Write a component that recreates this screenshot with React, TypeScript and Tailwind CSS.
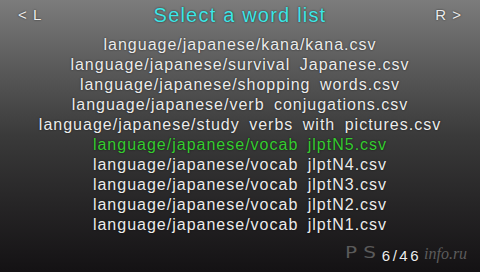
const files = [
  'language/japanese/kana/kana.csv',
  'language/japanese/survival Japanese.csv',
  'language/japanese/shopping words.csv',
  'language/japanese/verb conjugations.csv',
  'language/japanese/study verbs with pictures.csv',
  'language/japanese/vocab jlptN5.csv',
  'language/japanese/vocab jlptN4.csv',
  'language/japanese/vocab jlptN3.csv',
  'language/japanese/vocab jlptN2.csv',
  'language/japanese/vocab jlptN1.csv',
];

const selected = 5;

export default function App() {
  return (
    <div
      className="relative w-[480px] h-[272px] overflow-hidden bg-gradient-to-b from-[#7c7c7c] via-[#3a3a3a] to-[#141214] text-[#ececec] [text-shadow:0_0_2px_rgba(0,0,0,0.7)]"
      style={{ fontFamily: '"Liberation Sans", Arial, sans-serif' }}
    >
      <div className="flex items-center justify-between h-[30px] px-[18px]">
        <span className="text-[15px] tracking-[1px] w-[40px]">&lt; L</span>
        <span className="text-[20px] tracking-[1.2px] text-[#3ee6e6]">Select a word list</span>
        <span className="text-[15px] tracking-[1px] w-[40px] text-right">R &gt;</span>
      </div>
      <ul className="flex flex-col items-center mt-[5px]">
        {files.map((f, i) => (
          <li
            key={f}
            className={`h-[20px] leading-[20px] text-[16px] tracking-[1px] [word-spacing:4px] whitespace-pre ${i === selected ? 'text-[#36cc30]' : ''}`}
          >
            {f}
          </li>
        ))}
      </ul>
      {/* watermark sits under the page counter */}
      <span
        className="absolute left-[345px] top-[245px] text-[16px] tracking-[5px] leading-none text-[#5a5a5a] [text-shadow:none] scale-x-125 origin-left"
        style={{ fontFamily: '"DejaVu Sans", sans-serif' }}
      >
        PS
      </span>
      <span
        className="absolute left-[424px] top-[246px] text-[16px] italic leading-none text-[#5c5c5c] [text-shadow:none]"
        style={{ fontFamily: '"Liberation Serif", serif' }}
      >
        info.ru
      </span>
      <div className="flex justify-end pr-[59px] mt-[11px]">
        <span className="relative z-10 h-[20px] leading-[20px] text-[15px] tracking-[2.5px]">6/46</span>
      </div>
    </div>
  );
}
